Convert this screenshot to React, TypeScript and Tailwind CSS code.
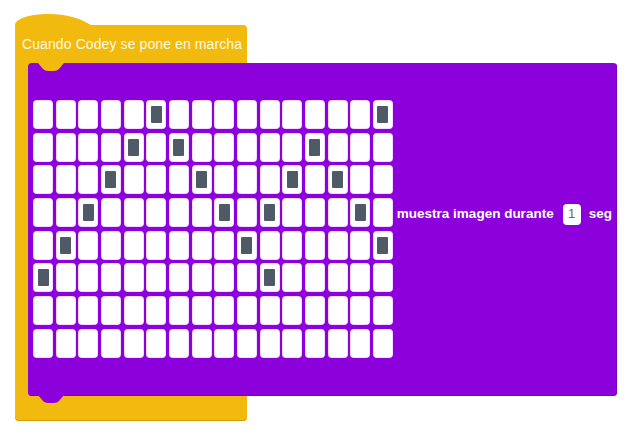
import React from "react";

const lit: number[][] = [
  [5, 15],
  [4, 6, 12],
  [3, 7, 11, 13],
  [2, 8, 10, 14],
  [1, 9, 15],
  [0, 10],
  [],
  [],
];

function Cell({ on }: { on: boolean }) {
  return (
    <div className="w-[18px] h-[27px] rounded-[3px] bg-white shadow-[0_0_0_1px_#f3dcff] flex items-center justify-center">
      {on && <div className="w-[11px] h-[17px] bg-[#4e5b66] rounded-[1px]" />}
    </div>
  );
}

export default function App() {
  return (
    <div className="w-[637px] h-[436px] bg-white font-['Liberation_Sans',Arial,sans-serif] pt-[14px] pl-[15px] overflow-hidden">
      {/* hat bump */}
      <svg width="76" height="11" viewBox="0 0 76 11" className="block">
        <path d="M0 11 C0 5 14 0 34 0 C52 0 64 4 76 11 Z" fill="#f2b90e" />
      </svg>
      <div className="relative w-[232px] h-[396px] bg-[#f2b90e] rounded-b-[4px] rounded-tr-[4px] shadow-[inset_0_-1px_0_#d39f08] flex flex-col">
        <div className="h-[38px] flex items-center pl-[7px] text-[14px] text-[#fff9e0] tracking-[0.1px]">
          Cuando Codey se pone en marcha
        </div>
        <div className="relative ml-[13px] w-[589px] h-[333px] bg-[#8c00db] rounded-[4px] shadow-[inset_-1px_-1px_0_#7a00c0] flex items-start">
          {/* top notch */}
          <svg width="26" height="9" viewBox="0 0 26 9" className="absolute left-[10px] top-0">
            <path d="M0 0 L26 0 L21 6 Q19 8 16 8 L10 8 Q7 8 5 6 Z" fill="#f2b90e" />
          </svg>
          {/* bottom tab */}
          <svg width="26" height="9" viewBox="0 0 26 9" className="absolute left-[10px] bottom-[-8px]">
            <path d="M0 0 L26 0 L21 6 Q19 8 16 8 L10 8 Q7 8 5 6 Z" fill="#8c00db" />
          </svg>
          <div className="mt-[38px] ml-[6px] grid grid-cols-[repeat(16,18px)] gap-x-[4.67px] gap-y-[5.7px]">
            {lit.map((row, r) =>
              Array.from({ length: 16 }).map((_, c) => (
                <Cell key={`${r}-${c}`} on={row.includes(c)} />
              ))
            )}
          </div>
          <div className="mt-[140px] ml-[5px] flex items-center h-[22px] text-white text-[13.5px] font-semibold">
            <span>muestra imagen durante</span>
            <span className="ml-[9px] w-[18px] h-[21px] bg-white rounded-[4px] text-[#666] font-normal text-[13px] flex items-center justify-center">
              1
            </span>
            <span className="ml-[8px]">seg</span>
          </div>
        </div>
      </div>
    </div>
  );
}
